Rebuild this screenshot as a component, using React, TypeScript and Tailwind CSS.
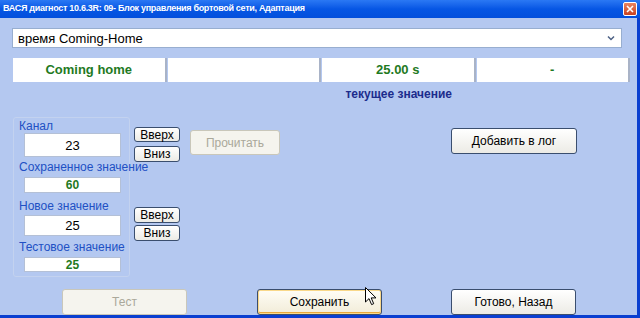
import React from "react";

const font = "font-['Liberation_Sans',Arial,sans-serif]";

function XpButton({
  label,
  className = "",
  disabled = false,
  hot = false,
}: {
  label: string;
  className?: string;
  disabled?: boolean;
  hot?: boolean;
}) {
  const look = disabled
    ? "border-[#c9c7ba] bg-[#f5f4ee] text-[#aaa89a]"
    : hot
      ? "border-[#3a4e6e] bg-linear-to-b from-[#fffdf6] to-[#f1ecd8] text-black shadow-[inset_0_0_0_1px_#f9d88a,inset_0_-1px_0_1px_#eaa83a]"
      : "border-[#3a4e6e] bg-linear-to-b from-white to-[#ecebe5] text-black";
  return (
    <div
      className={`flex items-center justify-center rounded-[3px] border text-[12px] leading-none ${look} ${className}`}
    >
      {label}
    </div>
  );
}

function Label({ text, className = "" }: { text: string; className?: string }) {
  return (
    <div className={`h-[14px] pl-[5px] text-[12px] leading-[14px] text-[#2150c4] ${className}`}>
      {text}
    </div>
  );
}

function Field({
  value,
  green = false,
  className = "",
}: {
  value: string;
  green?: boolean;
  className?: string;
}) {
  return (
    <div
      className={`ml-[10px] flex w-[97px] items-center justify-center border border-[#b4c0d6] bg-white leading-none ${
        green ? "text-[12px] font-bold text-[#1f7a1f]" : "text-[13px] text-black"
      } ${className}`}
    >
      {value}
    </div>
  );
}

function Cursor() {
  return (
    <svg
      className="absolute left-[365px] top-[287px]"
      width="12"
      height="19"
      viewBox="0 0 12 19"
    >
      <path
        d="M0.5 0.5 L0.5 15 L4 11.6 L6.6 17.6 L8.7 16.7 L6.2 10.9 L11 10.9 Z"
        fill="white"
        stroke="black"
        strokeWidth="1"
        strokeLinejoin="miter"
      />
    </svg>
  );
}

export default function App() {
  return (
    <div className={`relative flex h-[318px] w-[640px] flex-col overflow-hidden ${font}`}>
      {/* title bar */}
      <div className="flex h-[18px] shrink-0 items-center bg-linear-to-b from-[#2a78f4] via-[#0656e4] to-[#034fdc] pl-[3px] pr-[3px]">
        <span className="flex-1 truncate text-[9px] font-bold tracking-[-0.3px] text-white">
          ВАСЯ диагност 10.6.3R: 09- Блок управления бортовой сети, Адаптация
        </span>
        <div className="flex h-[14px] w-[14px] items-center justify-center rounded-[2px] border border-white bg-linear-to-b from-[#e9835f] to-[#c9411f]">
          <svg width="8" height="8" viewBox="0 0 8 8">
            <path d="M1 1 L7 7 M7 1 L1 7" stroke="white" strokeWidth="1.6" />
          </svg>
        </div>
      </div>

      {/* body */}
      <div className="flex flex-1 flex-col border-r-[3px] border-b-[3px] border-[#0a3fd0] bg-[#b4c8f0]">
        {/* combo */}
        <div className="ml-[12px] mt-[10px] flex h-[20px] w-[610px] items-center border border-[#98aed0] bg-white pl-[5px] pr-[3px]">
          <span className="flex-1 text-[13px] leading-none text-black">время Coming-Home</span>
          <div className="flex h-[16px] w-[14px] items-center justify-center">
            <svg width="8" height="6" viewBox="0 0 8 6">
              <path d="M1 1.5 L4 4.5 L7 1.5" fill="none" stroke="#4d6185" strokeWidth="1.5" />
            </svg>
          </div>
        </div>

        {/* value cells */}
        <div className="ml-[13px] mt-[10px] grid w-[617px] grid-cols-4 gap-x-[1px]">
          {["Coming home", "", "25.00 s", "-"].map((v, i) => (
            <div
              key={i}
              className="flex h-[24px] items-center justify-center border-r-[2px] border-[#a9b3c7] bg-white text-[13px] font-bold text-[#1f7a1f]"
            >
              {v}
            </div>
          ))}
          <div className="col-start-3 mt-[5px] h-[14px] text-center text-[12px] font-bold leading-[14px] text-[#1c2c8c]">
            текущее значение
          </div>
        </div>

        {/* main area */}
        <div className="mt-[16px] flex items-start">
          {/* group */}
          <div className="ml-[13px] flex h-[160px] w-[117px] flex-col rounded-[3px] border border-[#c3d2ef] pt-[1px]">
            <Label text="Канал" />
            <Field value="23" className="h-[24px]" />
            <Label text="Сохраненное значение" className="mt-[3px] whitespace-nowrap" />
            <Field value="60" green className="mt-[3px] h-[16px]" />
            <Label text="Новое значение" className="mt-[6px]" />
            <Field value="25" className="mt-[2px] h-[21px]" />
            <Label text="Тестовое значение" className="mt-[4px] whitespace-nowrap" />
            <Field value="25" green className="mt-[3px] h-[15px]" />
          </div>

          {/* up / down */}
          <div className="ml-[4px] flex w-[46px] flex-col">
            <XpButton label="Вверх" className="mt-[10px] h-[15px]" />
            <XpButton label="Вниз" className="mt-[4px] h-[16px]" />
            <XpButton label="Вверх" className="mt-[45px] h-[16px]" />
            <XpButton label="Вниз" className="mt-[2px] h-[16px]" />
          </div>

          <XpButton label="Прочитать" disabled className="ml-[10px] mt-[13px] h-[25px] w-[90px]" />
          <XpButton label="Добавить в лог" className="ml-[171px] mt-[11px] h-[26px] w-[126px]" />
        </div>

        {/* bottom buttons */}
        <div className="mt-auto flex h-[26px]">
          <XpButton label="Тест" disabled className="ml-[62px] w-[125px]" />
          <XpButton label="Сохранить" hot className="ml-[70px] w-[125px]" />
          <XpButton label="Готово, Назад" className="ml-[69px] w-[125px]" />
        </div>
      </div>

      <Cursor />
    </div>
  );
}
